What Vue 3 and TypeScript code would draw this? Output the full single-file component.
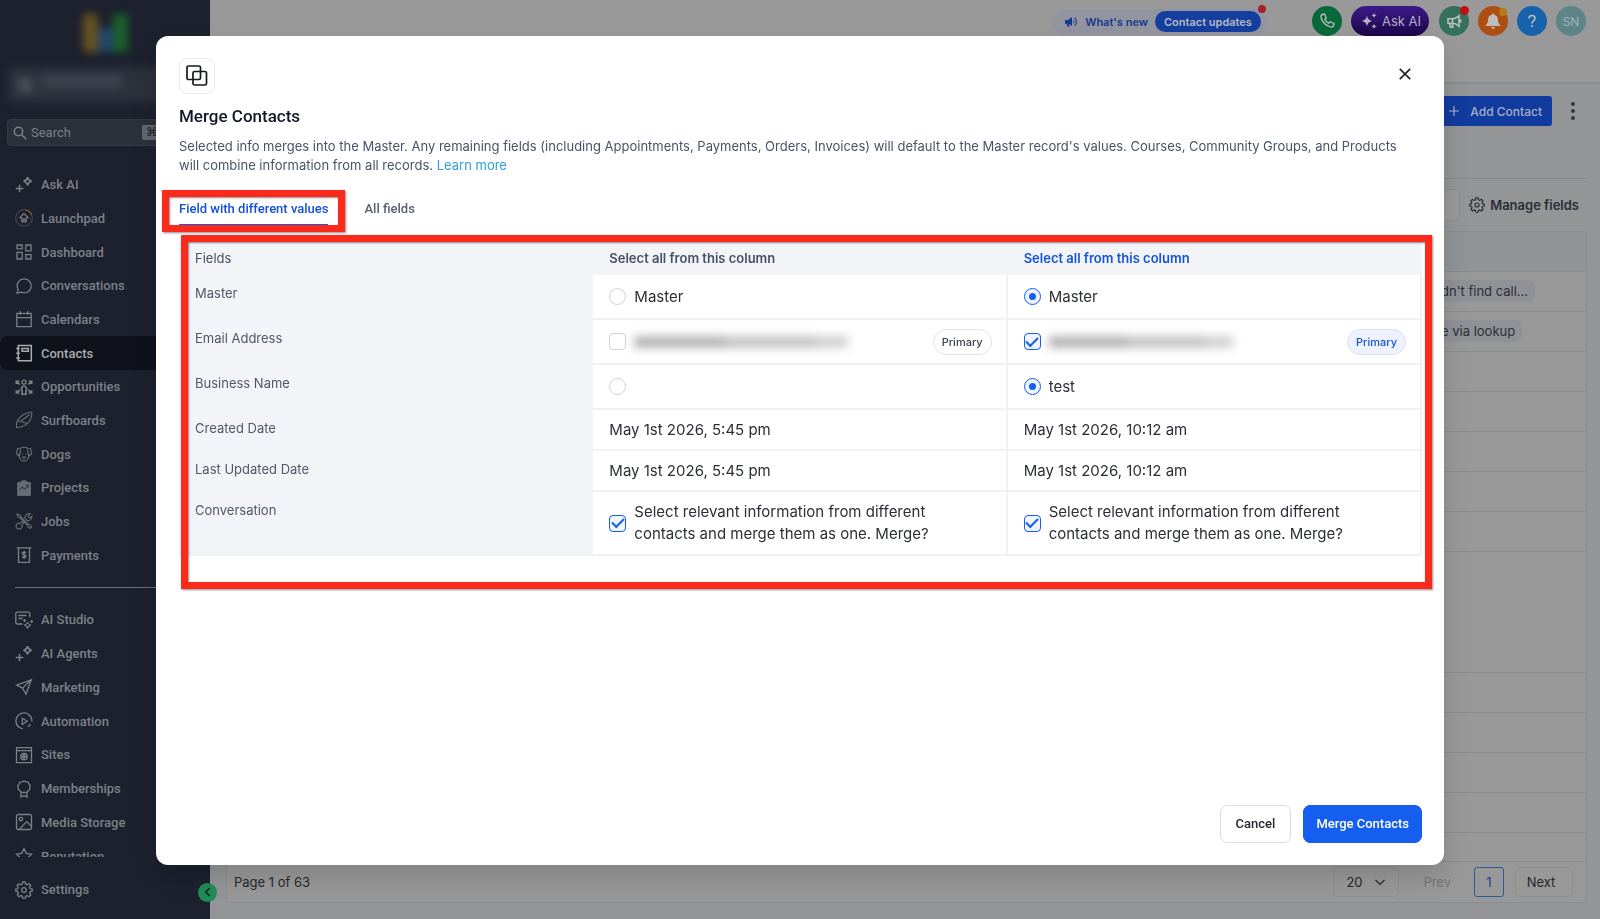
<script setup lang="ts">
import { ref } from 'vue'

interface NavItem {
  label: string
  icon: string
  active?: boolean
  dim?: boolean
}

const sparkle =
  '<path d="M12.6 1.2c.5 2.6 1.5 3.6 4.1 4.1-2.6.5-3.6 1.500-4.100 4.100-.5-2.600-1.500-3.600-4.100-4.100 2.600-.5 3.600-1.500 4.100-4.100z" stroke-width="1.500"/><path d="M4.500 8.700v7.600M.7 12.500h7.600" stroke-width="1.500"/>'

const primaryNav: NavItem[] = [
  { label: 'Ask AI', icon: sparkle },
  {
    label: 'Launchpad',
    icon: '<circle cx="9" cy="9" r="8.300" stroke-width=".8" opacity=".6"/><path d="M10.500.9a8.300 8.300 0 0 1 6.200 5" stroke="#8a6024"/><path d="M9 4.500 4.800 8.700h2v4.200h1.400V10h1.600v2.900h1.400V8.700h2z" stroke-width="1.100"/>',
  },
  {
    label: 'Dashboard',
    icon: '<path d="M2 2h5.200v3.800H2zM10.800 2H16v5.800h-5.200zM2 9.400h5.200V16H2zM10.800 11.600H16V16h-5.200z"/>',
  },
  { label: 'Conversations', icon: '<path d="M9.300 1.900a7 7 0 1 1-3.100 13.300L2 16.200l1.200-3.700A7 7 0 0 1 9.300 1.900z"/>' },
  { label: 'Calendars', icon: '<path d="M1.800 3.300h14.400v13.300H1.800zM1.800 7.600h14.400M5.300 1v4M12.700 1v4"/>' },
  {
    label: 'Contacts',
    active: true,
    icon: '<path d="M3.300 1.600h13v15.200h-13zM1.200 4.500h3.600M1.200 9.200h3.600M1.200 13.900h3.600M7 4.400h6.300v2.800H7z" stroke-width="1.500"/>',
  },
  {
    label: 'Opportunities',
    icon: '<circle cx="9" cy="4.200" r="2"/><path d="M7 16.300v-3.500c-.8-1-.8-4.800 2-4.800s2.800 3.800 2 4.800v3.500zM4.800 6.500 1.500 3.500M1.300 6V3.300h2.900M13.200 6.500l3.300-3M16.700 6V3.300h-2.900M4.800 11.800l-3.300 3M1.300 12.300V15h2.900M13.200 11.800l3.300 3M16.700 12.300V15h-2.900" stroke-width="1.600"/>',
  },
  {
    label: 'Surfboards',
    dim: true,
    icon: '<path d="M1.500 16.500c-.6-4.500 1.500-9 6-12.200C10.500 2 14 1 16.800 1.300c.2 3.700-1 8-4.300 11C9 15.500 5 16.300 1.500 16.500zM3.300 9.800l8.700 2.800M5.500 10.500 15 3.200" stroke-width="1.100"/>',
  },
  {
    label: 'Dogs',
    dim: true,
    icon: '<path d="M5.200 3.200c2.300-1.100 5.300-1.100 7.600 0l2.700.3 1.200 5-2 2-1.400-1.400.3 3.600L11 16H7l-2.600-3.300.3-3.600-1.400 1.400-2-2 1.200-5zM4.700 9.100l.9-4.800M13.300 9.100l-.9-4.800M6.900 8.600v.8M11.100 8.600v.8M7.800 12h2.400L9 13.200zM9 13.200v1.300" stroke-width="1.100"/>',
  },
  {
    label: 'Projects',
    dim: true,
    icon: '<path fill-rule="evenodd" fill="currentColor" d="M2.500 3.500H6V2.200h1.600a1.500 1.500 0 0 1 2.800 0H12v1.300h3.500v13h-13zM4.300 11.900l3-3 2.300 2.200 3.200-3.300v1.700h1.200V5.700h-3.800v1.200h1.700L9.600 9.300 7.300 7 4.300 10.200z" stroke-width=".8"/>',
  },
  {
    label: 'Jobs',
    dim: true,
    icon: '<path d="m2 2 3 1 .7 1.700 7.600 7.600 1.700.5 1.500 2.300-1.200 1.200-2.400-1.500-.5-1.700L4.800 5.500 3 5zM10.300 6.800a3.900 3.900 0 0 1 4.900-5L12.900 4l1 1.300 1.400.6 1.600-1.700a3.800 3.800 0 0 1-4.800 4.300zM7.600 9.200l-2.300 2.200a3 3 0 1 0 1.500 1.600L9 10.700z" stroke-width="1.100"/>',
  },
  {
    label: 'Payments',
    icon: '<path d="M1.500 1.900h15M3.500 2.200v14.200h11V2.200"/><path d="M11 6.700c-1-1-3.800-1-3.800.6 0 1.800 3.800 1.100 3.800 2.900 0 1.600-2.800 1.700-3.900.6M9.100 5v8" stroke-width="1.300"/>',
  },
]

const secondaryNav: NavItem[] = [
  {
    label: 'AI Studio',
    icon: '<path d="M7.500 13H2.300C1.300 13 .8 12.500.8 11.500V2.700c0-1 .5-1.500 1.500-1.500h11c1 0 1.500.5 1.500 1.500v3.500M3.500 4.500h8M3.500 7.500h4"/><path d="M12.600 11c.4 2 1.200 2.800 3.200 3.200-2 .4-2.800 1.200-3.200 3.200-.4-2-1.200-2.800-3.200-3.200 2-.4 2.800-1.200 3.200-3.200zM9.500 8v3M8 9.500h3M16.700 9v3M15.200 10.500h3" stroke-width="1.200"/>',
  },
  { label: 'AI Agents', icon: sparkle },
  { label: 'Marketing', icon: '<path d="M16.300 1.800 1.500 7.100l6 3 3.500 6.200zM16.300 1.800 7.500 10.100"/>' },
  { label: 'Automation', icon: '<path d="M7.800 16.800A8 8 0 1 1 16.900 9.500"/><path d="m7.300 6.300 5 3-5 3zM13.200 14.800l2.300-2.500"/>' },
  {
    label: 'Sites',
    icon: '<path d="M1.500 1.700h15v15h-15zM1.500 4.600h15"/><circle cx="9" cy="10.700" r="3.200"/><path d="M6 10.700h6M9 7.700v6" stroke-width="1.700"/>',
  },
  {
    label: 'Memberships',
    icon: '<path d="m9 .9 1.900.9 2.100.2 1 1.800 1.100 1.700-.4 2 .1 2-1.600 1.300-1.500 1.400-2 .2-.7.200-.7-.2-2-.2-1.500-1.400-1.600-1.300.1-2-.4-2L4 3.800 5 2l2.100-.2zM6 12v5l3-1.600 3 1.600v-5"/>',
  },
  {
    label: 'Media Storage',
    icon: '<rect x="1.500" y="1.500" width="15" height="15" rx="1.800"/><circle cx="6" cy="6" r="1.700"/><path d="m4.500 16.200 7.200-7.600 4.600 4.600"/>',
  },
  { label: 'Reputation', icon: '<path d="m9 1.500 2.300 4.900 5.200.7-3.800 3.700.9 5.200L9 13.500 4.400 16l.9-5.200L1.500 7.100l5.200-.7z"/>' },
]

const gear =
  '<path d="m7.700 1-.5 2.100-1.500.7-1.900-1.100-1.700 1.700 1.100 1.900-.6 1.500L.8 8v2.200l2 .4.600 1.500-1.100 1.900 1.700 1.700 1.900-1.100 1.400.6.400 2h2.600l.4-2 1.500-.6 1.900 1.100 1.700-1.700-1.100-1.900.5-1.400 2-.5V8l-2-.3-.6-1.600 1.100-1.800-1.700-1.700-1.800 1.100-1.600-.6L10.200 1z"/><circle cx="9" cy="9" r="2.300"/>'

const master = ref('right')
const business = ref('right')
const leftEmail = ref(false)
const rightEmail = ref(true)
const leftConversation = ref(true)
const rightConversation = ref(true)
const pageSize = ref('20')

const contactRows: { tag?: string; size: string }[] = [
  { tag: "dn't find call...", size: 'normal' },
  { tag: 'e via lookup', size: 'normal' },
  { size: 'normal' },
  { size: 'normal' },
  { size: 'normal' },
  { size: 'normal' },
  { size: 'normal' },
  { size: 'tall' },
  { size: 'normal' },
  { size: 'normal' },
  { size: 'normal' },
  { size: 'normal' },
  { size: 'short' },
]
</script>

<template>
  <div class="app">
    <aside class="sidebar">
      <div class="brand" aria-hidden="true"><i class="bar yellow"></i><i class="bar blue"></i><i class="bar green"></i></div>
      <div class="account" aria-hidden="true"><i class="account-icon"></i><i class="account-name"></i></div>
      <label class="search">
        <svg viewBox="0 0 14 14" width="14" height="14" fill="none" stroke="currentColor" stroke-width="1.500"><circle cx="5.500" cy="5.500" r="4.200" /><path d="m8.700 8.700 4.500 4.500" /></svg>
        <input type="text" placeholder="Search" aria-label="Search" />
        <kbd>⌘K</kbd>
      </label>
      <nav class="nav">
        <div class="group">
          <a v-for="item in primaryNav" :key="item.label" href="#" class="nav-item" :class="{ active: item.active }">
            <svg viewBox="0 0 18 18" width="18" height="18" :class="{ dim: item.dim }" v-html="item.icon"></svg>
            <span>{{ item.label }}</span>
          </a>
        </div>
        <hr />
        <div class="group second">
          <a v-for="item in secondaryNav" :key="item.label" href="#" class="nav-item">
            <svg viewBox="0 0 18 18" width="18" height="18" v-html="item.icon"></svg>
            <span>{{ item.label }}</span>
          </a>
        </div>
      </nav>
      <div class="side-foot">
        <a href="#" class="nav-item"><svg viewBox="0 0 18 18" width="18" height="18" v-html="gear"></svg><span>Settings</span></a>
      </div>
      <button class="collapse" aria-label="Collapse sidebar">
        <svg viewBox="0 0 10 10" width="10" height="10" fill="none" stroke="currentColor" stroke-width="1.500"><path d="M6.800 1 2.800 5l4 4" /></svg>
      </button>
    </aside>

    <main class="main">
      <header class="topbar">
        <div class="news">
          <svg viewBox="0 0 14 14" width="14" height="14" fill="currentColor"><path d="M1 5h3l4-3v9L4.800 8.800l.5 3H3.500L2.700 8.700H1zM9.500 4.500a3 3 0 0 1 0 4.500zM11 2.300a6 6 0 0 1 0 9l-.7-.8a5 5 0 0 0 0-7.400z" /></svg>
          <span>What's new</span>
          <button class="updates">Contact updates<i class="dot red"></i></button>
        </div>
        <button class="round phone" aria-label="Call">
          <svg viewBox="0 0 16 16" width="16" height="16" fill="none" stroke="currentColor" stroke-width="1.300"><path d="M3.500 1.500 5.500 1l1.800 3.800-1.500 1.500c.8 1.700 2.200 3.100 3.900 3.900l1.500-1.500L15 10.500l-.5 2c-.4 1.500-1.700 1.900-3 1.500C6.500 12.500 3.500 9.500 2 4.500c-.4-1.300 0-2.600 1.500-3z" /></svg>
        </button>
        <button class="ask">
          <svg viewBox="0 0 18 18" width="18" height="18" fill="currentColor"><path d="M7 3.500c.8 3.400 2 4.600 5.500 5.500C9 9.900 7.800 11.100 7 14.500 6.200 11.100 5 9.900 1.500 9 5 8.100 6.200 6.900 7 3.500zM14 .8c.4 1.700 1 2.300 2.700 2.700-1.700.4-2.300 1-2.700 2.700-.4-1.700-1-2.300-2.700-2.700 1.700-.4 2.300-1 2.700-2.700zM14 11.800c.4 1.700 1 2.300 2.700 2.700-1.700.4-2.300 1-2.700 2.700-.4-1.700-1-2.300-2.700-2.700 1.700-.4 2.300-1 2.700-2.700z" /></svg>
          Ask AI
        </button>
        <button class="round promo" aria-label="Announcements">
          <svg viewBox="0 0 16 16" width="16" height="16" fill="none" stroke="currentColor" stroke-width="1.600"><path d="M2 5.800h4.500c2.500 0 4.500-1 6.500-3v10.400c-2-2-4-3-6.500-3H2zM6.500 5.800v4.400M3.500 10.200l1 4h2.300l-.6-4M14.700 6.500v3" /></svg>
          <i class="dot bright"></i>
        </button>
        <button class="round bell" aria-label="Notifications">
          <svg viewBox="0 0 16 16" width="16" height="16" fill="currentColor"><path d="M8 .5c.8 0 1.300.5 1.300 1.200C11.500 2.300 13 4 13 6.800c0 3 .8 4.200 2.300 5.200v1H.7v-1C2.200 11 3 9.800 3 6.800 3 4 4.500 2.300 6.700 1.700 6.700 1 7.200.5 8 .5zM6 14h4c0 1-.9 1.700-2 1.700S6 15 6 14z" /></svg>
          <i class="dot amber"></i>
        </button>
        <button class="round help" aria-label="Help">
          <svg viewBox="0 0 16 16" width="16" height="16" fill="none" stroke="currentColor" stroke-width="1.600"><path d="M5 5.500C5 1.500 11 1.500 11 5.300 11 7.700 8 7.500 8 10.500M8 12v2" /></svg>
        </button>
        <button class="round avatar">SN</button>
      </header>

      <section class="content">
        <div class="actions">
          <button class="add">
            <svg viewBox="0 0 12 12" width="12" height="12" fill="none" stroke="currentColor" stroke-width="1.200"><path d="M6 1v10M1 6h10" /></svg>
            Add Contact
          </button>
          <button class="more" aria-label="More actions"><i></i><i></i><i></i></button>
        </div>
        <div class="tools">
          <div class="filter"></div>
          <button class="manage"><svg viewBox="0 0 18 18" width="16" height="16" v-html="gear"></svg>Manage fields</button>
        </div>
        <div class="panel">
          <table class="contacts">
            <thead><tr><th></th><th class="tag-col"></th></tr></thead>
            <tbody>
              <tr v-for="(row, i) in contactRows" :key="i" :class="row.size">
                <td></td>
                <td><span v-if="row.tag" class="tag">{{ row.tag }}</span></td>
              </tr>
            </tbody>
          </table>
          <footer class="pager">
            <span class="page-info">Page 1 of 63</span>
            <div class="size">
              <select v-model="pageSize" aria-label="Rows per page"><option>20</option></select>
              <svg viewBox="0 0 12 12" width="12" height="12" fill="none" stroke="currentColor" stroke-width="1.200"><path d="m1.500 4 4.500 4.500L10.500 4" /></svg>
            </div>
            <button class="prev" disabled>Prev</button>
            <button class="current">1</button>
            <button class="next">Next</button>
          </footer>
        </div>
      </section>
    </main>

    <div class="overlay">
      <div class="modal" role="dialog" aria-modal="true" aria-labelledby="merge-title">
        <button class="close" aria-label="Close">
          <svg viewBox="0 0 12 12" width="12" height="12" fill="none" stroke="currentColor" stroke-width="1.700"><path d="m.8.8 10.400 10.400M11.200.8.8 11.200" /></svg>
        </button>
        <div class="badge">
          <svg viewBox="0 0 22 22" width="22" height="22" fill="none" stroke="currentColor" stroke-width="1.700"><rect x="1" y="1" width="13.500" height="13.500" rx="1.600" /><rect x="7" y="6.500" width="13.500" height="13.500" rx="1.600" /></svg>
        </div>
        <h2 id="merge-title">Merge Contacts</h2>
        <p class="intro">
          Selected info merges into the Master. Any remaining fields (including Appointments, Payments, Orders, Invoices) will default to the Master record's values. Courses, Community Groups, and Products will combine information from all records.
          <a href="#">Learn more</a>
        </p>
        <div class="tabs" role="tablist">
          <div class="tab-wrap">
            <button class="tab selected" role="tab" aria-selected="true">Field with different values</button>
            <i class="mark tab-mark"></i>
          </div>
          <button class="tab" role="tab" aria-selected="false">All fields</button>
        </div>

        <div class="table-wrap">
          <table class="fields">
            <thead>
              <tr>
                <th scope="col" class="name">Fields</th>
                <th scope="col"><button>Select all from this column</button></th>
                <th scope="col"><button class="chosen">Select all from this column</button></th>
              </tr>
            </thead>
            <tbody>
              <tr class="choice">
                <th scope="row">Master</th>
                <td><label class="pick"><input v-model="master" type="radio" name="master" value="left" /><span>Master</span></label></td>
                <td><label class="pick"><input v-model="master" type="radio" name="master" value="right" /><span>Master</span></label></td>
              </tr>
              <tr class="choice">
                <th scope="row">Email Address</th>
                <td>
                  <div class="email">
                    <input v-model="leftEmail" type="checkbox" aria-label="Left email" />
                    <span class="hidden-mail long"><i></i><i></i><i></i></span>
                    <span class="pill">Primary</span>
                  </div>
                </td>
                <td>
                  <div class="email">
                    <input v-model="rightEmail" type="checkbox" aria-label="Right email" />
                    <span class="hidden-mail"><i></i><i></i><i></i></span>
                    <span class="pill on">Primary</span>
                  </div>
                </td>
              </tr>
              <tr class="choice">
                <th scope="row">Business Name</th>
                <td><label class="pick"><input v-model="business" type="radio" name="business" value="left" aria-label="Empty business name" /></label></td>
                <td><label class="pick"><input v-model="business" type="radio" name="business" value="right" /><span>test</span></label></td>
              </tr>
              <tr class="plain">
                <th scope="row">Created Date</th>
                <td>May 1st 2026, 5:45 pm</td>
                <td>May 1st 2026, 10:12 am</td>
              </tr>
              <tr class="plain">
                <th scope="row">Last Updated Date</th>
                <td>May 1st 2026, 5:45 pm</td>
                <td>May 1st 2026, 10:12 am</td>
              </tr>
              <tr class="double">
                <th scope="row">Conversation</th>
                <td><label class="pick"><input v-model="leftConversation" type="checkbox" /><span class="wrap">Select relevant information from different contacts and merge them as one. Merge?</span></label></td>
                <td><label class="pick"><input v-model="rightConversation" type="checkbox" /><span class="wrap">Select relevant information from different contacts and merge them as one. Merge?</span></label></td>
              </tr>
            </tbody>
          </table>
          <i class="mark table-mark"></i>
        </div>

        <div class="modal-actions">
          <button class="cancel">Cancel</button>
          <button class="confirm">Merge Contacts</button>
        </div>
      </div>
    </div>
  </div>
</template>

<style>
body {
  margin: 0;
  background: #939597;
}
</style>

<style scoped>
.app,
.app * {
  box-sizing: border-box;
}
.app {
  position: relative;
  display: grid;
  grid-template-columns: 210px 1fr;
  height: 100vh;
  overflow: hidden;
  font-family: Inter, 'Liberation Sans', sans-serif;
  font-size: 13px;
  color: #25282d;
}
button,
input,
select {
  font: inherit;
  color: inherit;
  margin: 0;
  padding: 0;
  border: 0;
  background: none;
}
a {
  text-decoration: none;
}

/* Sidebar */
.sidebar {
  position: relative;
  display: flex;
  flex-direction: column;
  min-height: 0;
  background: #1c212d;
  color: #7c8087;
  font-family: Roboto, sans-serif;
  font-weight: 500;
}
.brand {
  display: flex;
  justify-content: center;
  align-items: flex-end;
  height: 52px;
  flex: none;
  filter: blur(4px);
}
.bar {
  width: 15px;
  height: 38px;
}
.yellow {
  background: #66531f;
}
.blue {
  height: 24px;
  background: #21466a;
}
.green {
  background: #1b602c;
}
.account {
  display: flex;
  align-items: center;
  gap: 10px;
  flex: none;
  height: 36px;
  margin: 15px 8px 16px;
  padding: 0 10px;
  background: #2c313c;
  filter: blur(5px);
}
.account-icon {
  width: 14px;
  height: 14px;
  background: #4d535d;
}
.account-name {
  width: 80px;
  height: 12px;
  margin-bottom: 8px;
  background: #3f4550;
}
.search {
  display: flex;
  align-items: center;
  gap: 4px;
  flex: none;
  height: 27px;
  margin: 0 8px 22px 7px;
  padding: 0 6px 0 5px;
  border: 1px solid #353b46;
  border-radius: 4px;
  background: #2b303b;
}
.search svg {
  flex: none;
}
.search input {
  flex: 1;
  min-width: 0;
  font-size: 13px;
  font-weight: 400;
  outline: 0;
}
.search input::placeholder {
  color: #7c8087;
  opacity: 1;
}
.search kbd {
  width: 53px;
  padding-left: 4px;
  border-radius: 2px;
  background: #62666e;
  color: #171b25;
  font: 12px/15px 'DejaVu Sans', sans-serif;
}
.nav {
  flex: 1;
  min-height: 0;
  overflow: hidden;
}
.group {
  display: grid;
  grid-auto-rows: 1fr;
  height: 404px;
}
.group.second {
  height: 270px;
}
.nav hr {
  height: 1px;
  margin: 15px;
  border: 0;
  background: #6b6f76;
}
.nav-item {
  display: flex;
  align-items: center;
  gap: 8px;
  padding-left: 15px;
  font-size: 13px;
  color: #7c8087;
}
.nav-item.active {
  background: #0f121a;
  border-radius: 8px 0 0 8px;
  color: #a9abae;
}
.nav-item svg,
.manage svg {
  flex: none;
  fill: none;
  stroke: currentColor;
  stroke-width: 1.300;
}
.nav-item svg.dim {
  opacity: 0.8;
}
.side-foot {
  flex: none;
  height: 63px;
  padding-top: 16px;
}
.side-foot .nav-item {
  height: 34px;
}
.collapse {
  position: absolute;
  right: -7px;
  bottom: 18px;
  width: 19px;
  height: 19px;
  display: grid;
  place-items: center;
  border-radius: 50%;
  background: #218c5a;
  color: #10261f;
}

/* Page behind the dialog */
.main {
  display: flex;
  flex-direction: column;
  min-width: 0;
}
.topbar {
  display: flex;
  align-items: flex-start;
  justify-content: flex-end;
  flex: none;
  height: 84px;
  padding: 6px 14px 0 0;
  border-bottom: 2px solid #8b8c8e;
  background: #999;
}
.news {
  display: flex;
  align-items: center;
  gap: 7px;
  height: 25px;
  margin: 3px 36px 0 0;
  padding: 0 6px 0 12px;
  border-radius: 12px;
  background: #9295a0;
  color: #16388f;
  font-size: 11px;
  font-weight: 600;
}
.updates {
  position: relative;
  height: 21px;
  padding: 0 9px;
  border-radius: 11px;
  background: #143f9f;
  color: #b5b9c4;
  font-weight: 600;
}
.dot {
  position: absolute;
  border-radius: 50%;
}
.dot.red {
  top: -6px;
  right: -5px;
  width: 8px;
  height: 8px;
  background: #a5202a;
}
.dot.bright {
  top: 0;
  right: 0;
  width: 9px;
  height: 9px;
  background: #c00d12;
}
.dot.amber {
  top: 2px;
  right: 1px;
  width: 8px;
  height: 8px;
  background: #b87a12;
}
.round {
  position: relative;
  display: grid;
  place-items: center;
  width: 30px;
  height: 30px;
  margin-left: 9px;
  border-radius: 50%;
  color: #bdbdbd;
}
.phone {
  background: #07693a;
}
.ask {
  display: flex;
  align-items: center;
  gap: 4px;
  height: 30px;
  margin-left: 9px;
  padding: 0 8px 0 9px;
  border-radius: 15px;
  background: linear-gradient(#3c1a8a, #1c0648);
  color: #b3adc2;
}
.promo {
  margin-left: 10px;
  background: #34705b;
}
.bell {
  background: #ad4e12;
}
.help {
  background: #1763ab;
}
.avatar {
  background: #5d8587;
  color: #a3b5b6;
  font-size: 12px;
}
.content {
  display: flex;
  flex-direction: column;
  flex: 1;
  min-height: 0;
  padding: 12px 13px 17px 16px;
  background: #939597;
}
.actions {
  display: flex;
  justify-content: flex-end;
  gap: 11px;
  height: 83px;
  padding-right: 4px;
  border-bottom: 1px solid #858789;
}
.add {
  display: flex;
  align-items: center;
  gap: 10px;
  height: 30px;
  padding: 0 10px;
  border-radius: 3px;
  background: #123b9f;
  color: #a9b1c5;
  font-size: 12px;
  font-weight: 500;
}
.more {
  display: flex;
  flex-direction: column;
  align-items: center;
  justify-content: center;
  gap: 3px;
  width: 20px;
  height: 30px;
}
.more i {
  width: 4px;
  height: 4px;
  border-radius: 50%;
  background: #33373d;
}
.tools {
  display: flex;
  align-items: center;
  gap: 9px;
  height: 52px;
}
.filter {
  flex: 1;
  height: 32px;
  border: 1px solid #8b8d8f;
  border-radius: 6px;
  background: #999;
}
.manage {
  display: flex;
  align-items: center;
  gap: 5px;
  margin-right: 8px;
  font-weight: 600;
  color: #2a2e37;
}
.panel {
  flex: 1;
  border: 1px solid #8a8c8f;
  border-radius: 4px;
  background: #989898;
}
.contacts {
  width: 100%;
  border-collapse: collapse;
}
.contacts th {
  height: 39px;
  background: #919497;
}
.contacts .tag-col {
  width: 152px;
}
.contacts td,
.contacts th {
  padding: 0;
  border-bottom: 1px solid #898b8d;
}
.contacts .normal {
  height: 40px;
}
.contacts .tall {
  height: 121px;
}
.contacts .short {
  height: 29px;
}
.tag {
  padding: 3px 7px;
  border-radius: 8px;
  background: #909196;
  color: #2c2f36;
}
.pager {
  display: flex;
  align-items: center;
  height: 40px;
  padding: 0 13px 0 7px;
}
.page-info {
  margin-right: auto;
}
.size {
  position: relative;
  width: 66px;
  height: 30px;
  border: 1px solid #8e8f91;
  border-radius: 5px;
}
.size select {
  width: 100%;
  height: 100%;
  padding-left: 12px;
  appearance: none;
}
.size svg {
  position: absolute;
  top: 8px;
  right: 12px;
  pointer-events: none;
}
.prev {
  margin: 0 23px 0 24px;
  color: #727477;
}
.current {
  width: 30px;
  height: 30px;
  margin-right: 11px;
  border: 1px solid #27599f;
  border-radius: 3px;
  color: #16439a;
}
.next {
  width: 58px;
  height: 30px;
  padding-right: 6px;
  border: 1px solid #8e8f91;
  border-radius: 6px;
}

/* Dialog */
.overlay {
  position: fixed;
  inset: 0;
  display: flex;
  padding: 36px 156px 54px;
}
.modal {
  position: relative;
  display: flex;
  flex-direction: column;
  flex: 1;
  min-width: 0;
  padding: 22px 22px 22px 23px;
  border-radius: 12px;
  background: #fff;
  box-shadow: 0 12px 24px rgba(0, 0, 0, 0.14);
}
.close {
  position: absolute;
  top: 26px;
  right: 27px;
  display: grid;
  place-items: center;
  width: 24px;
  height: 24px;
  color: #22252b;
}
.badge {
  display: grid;
  place-items: center;
  width: 36px;
  height: 36px;
  border: 1px solid #e8eaee;
  border-radius: 8px;
  color: #16181d;
}
h2 {
  margin: 10px 0 0;
  font: 500 17px/24px Roboto, sans-serif;
  color: #101828;
}
.intro {
  margin: 9px 0 0;
  padding-right: 16px;
  font-size: 13px;
  line-height: 19px;
  color: #475467;
}
.intro a {
  color: #2e9fe0;
}
.tabs {
  display: flex;
  gap: 36px;
  margin-top: 23px;
}
.tab-wrap {
  position: relative;
}
.tab {
  height: 28px;
  padding-bottom: 4px;
  border-bottom: 2px solid transparent;
  font: 500 13px/20px Roboto, sans-serif;
  color: #5a6070;
}
.tab.selected {
  border-color: #155eef;
  color: #1550d8;
}
.mark {
  position: absolute;
  border: 7px solid #fb2a1b;
  box-shadow: 1px 1px 2px rgba(0, 0, 0, 0.45), inset 1px 1px 2px rgba(0, 0, 0, 0.45);
  pointer-events: none;
}
.tab-mark {
  inset: -8px -17px -6px;
}
.table-wrap {
  position: relative;
  margin-top: 16px;
  padding-bottom: 33px;
}
.table-mark {
  inset: -7px -10px 0 2px;
}
.fields {
  width: 100%;
  table-layout: fixed;
  border-collapse: separate;
  border-spacing: 0;
  color: #2c2f35;
}
.fields th,
.fields td {
  padding: 0 14px 0 16px;
  text-align: left;
}
.fields thead th {
  height: 33px;
  padding-bottom: 2px;
  background: #f2f4f8;
  font-size: 13px;
  font-weight: 600;
  color: #475063;
}
.fields thead .name {
  font-weight: 400;
}
.fields .chosen {
  color: #1452d9;
}
.fields tbody th {
  padding-top: 8px;
  vertical-align: top;
  background: #f2f4f8;
  border-bottom: 1px solid #eff1f5;
  font-size: 13px;
  line-height: 20px;
  font-weight: 400;
  color: #515866;
}
.fields tbody td {
  border-right: 2px solid #f1f2f4;
  border-bottom: 2px solid #f1f2f4;
  font-size: 15px;
  line-height: 22px;
}
.fields .choice {
  height: 45px;
}
.fields .plain {
  height: 41px;
}
.fields .double {
  height: 64px;
}
.pick,
.email {
  display: flex;
  align-items: center;
  gap: 8px;
}
.wrap {
  max-width: 310px;
}
.fields input {
  flex: none;
  display: grid;
  place-items: center;
  width: 17px;
  height: 17px;
  border: 1px solid #cdd1d7;
  appearance: none;
}
.fields input[type='radio'] {
  border-radius: 50%;
}
.fields input[type='checkbox'] {
  border-radius: 4px;
}
.fields input:checked {
  border-color: #155eef;
  background: #eff4ff;
}
.fields input[type='radio']:checked::after {
  content: '';
  width: 7px;
  height: 7px;
  border-radius: 50%;
  background: #155eef;
}
.fields input[type='checkbox']:checked::after {
  content: '';
  width: 10px;
  height: 5px;
  margin-bottom: 3px;
  border: solid #155eef;
  border-width: 0 0 2px 2px;
  transform: rotate(-45deg);
}
.hidden-mail {
  display: flex;
  align-items: center;
  width: 184px;
  height: 12px;
  filter: blur(5px);
}
.hidden-mail.long {
  width: 214px;
}
.hidden-mail i {
  flex: 3;
  height: 12px;
  background: #c4c4c4;
}
.hidden-mail i:first-child {
  background: #b4b4b4;
}
.hidden-mail i:last-child {
  flex: 1;
  background: #d0d0d0;
}
.pill {
  margin-left: auto;
  padding: 0 8px;
  border: 1px solid #e1e4e9;
  border-radius: 13px;
  font-size: 11px;
  line-height: 24px;
  font-weight: 500;
  color: #3b414d;
}
.pill.on {
  border-color: #dbe2f2;
  background: #edf2fe;
  color: #1452d9;
}
.modal-actions {
  display: flex;
  justify-content: flex-end;
  gap: 12px;
  margin-top: auto;
}
.modal-actions button {
  height: 38px;
  padding: 0 12px;
  border: 1px solid #d9dce1;
  border-radius: 7px;
  font: 500 13px/20px Roboto, sans-serif;
  color: #24272d;
}
.modal-actions .cancel {
  padding: 0 15px;
}
.modal-actions .confirm {
  border-color: #155eef;
  background: #155eef;
  color: #fff;
}
</style>
